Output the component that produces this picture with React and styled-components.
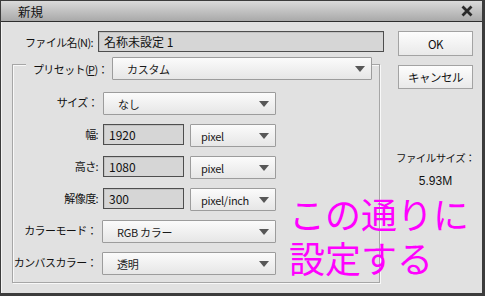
import React from 'react';
import styled, { createGlobalStyle } from 'styled-components';

const GlobalStyle = createGlobalStyle`
  body {
    margin: 0;
    background: #e1e1e1;
    font-family: "Liberation Sans", "Noto Sans CJK JP", sans-serif;
    font-size: 11px;
    color: #111;
  }
`;

const Window = styled.div`
  position: relative;
  box-sizing: border-box;
  width: 485px;
  height: 296px;
  display: flex;
  flex-direction: column;
  background: #e1e1e1;
  border: 1px solid #3c3c3c;
  border-right-width: 3px;
  border-bottom-width: 3px;
  overflow: hidden;
`;

const TitleBar = styled.div`
  height: 20px;
  flex-shrink: 0;
  display: flex;
  align-items: center;
  justify-content: space-between;
  padding: 0 9px 0 17px;
  background: linear-gradient(#dadada, #a9a9a9);
  border-bottom: 1px solid #2e2e2e;
  font-family: "Noto Sans CJK JP", sans-serif;
  font-size: 12.5px;
  color: #111;
`;

const Body = styled.div`
  flex: 1;
  display: flex;
  padding: 9px 0 0 11px;
  box-shadow: inset 1px 0 0 #f4f4f4;
`;

const Main = styled.div`
  width: 372px;
  display: flex;
  flex-direction: column;
`;

const FileRow = styled.div`
  display: flex;
  align-items: center;
  height: 21px;
`;

const Label = styled.span`
  width: ${p => p.$w || 86}px;
  flex-shrink: 0;
  padding-right: 5px;
  box-sizing: border-box;
  text-align: right;
  font-family: "Noto Sans CJK JP", sans-serif;
  font-size: 11px;
  white-space: nowrap;
  letter-spacing: -0.6px;
`;

const Field = styled.div`
  box-sizing: border-box;
  width: ${p => (p.$w ? `${p.$w}px` : 'auto')};
  flex: ${p => (p.$w ? 'none' : 1)};
  height: 21px;
  display: flex;
  align-items: center;
  padding-left: 5px;
  background: #d6d6d6;
  border: 1px solid #4e4e4e;
  box-shadow: inset 1px 1px 0 #c2c2c2;
  font-family: "Noto Sans CJK JP", sans-serif;
  font-size: 12px;
  color: #111;
`;

const Group = styled.div`
  margin-top: 12px;
  width: 368px;
  height: 219px;
  box-sizing: border-box;
  border: 1px solid #a6a6a6;
  box-shadow: inset 1px 1px 0 #f8f8f8, 1px 1px 0 #f8f8f8;
  display: flex;
  flex-direction: column;
`;

const PresetRow = styled.div`
  display: flex;
  align-items: center;
  margin: -8px 7px 12px 13px;
`;

const Legend = styled.span`
  width: 86px;
  flex-shrink: 0;
  padding-right: 4px;
  box-sizing: border-box;
  text-align: right;
  background: #e1e1e1;
  font-family: "Noto Sans CJK JP", sans-serif;
  font-size: 11px;
  letter-spacing: -0.6px;
  white-space: nowrap;
  u {
    text-underline-offset: 1px;
  }
`;

const Rows = styled.div`
  display: flex;
  flex-direction: column;
  gap: 9px;
`;

const Row = styled.div`
  display: flex;
  align-items: flex-start;
  height: 23px;
  gap: 6px;
  ${Label} {
    margin-right: -6px;
    line-height: 21px;
  }
`;

const SelectBox = styled.div`
  box-sizing: border-box;
  width: ${p => (p.$w ? `${p.$w}px` : 'auto')};
  flex: ${p => (p.$w ? 'none' : 1)};
  height: 23px;
  display: flex;
  align-items: center;
  justify-content: space-between;
  padding: 0 6px 0 ${p => p.$pad || 14}px;
  background: linear-gradient(#fbfbfb, #e6e6e6);
  border: 1px solid #9c9c9c;
  border-radius: 1px;
  font-family: "Noto Sans CJK JP", sans-serif;
  font-size: ${p => p.$fs || 11}px;
  letter-spacing: -0.3px;
  color: #1a1a1a;
  white-space: nowrap;
`;

const Side = styled.div`
  width: 75px;
  margin-left: 14px;
  display: flex;
  flex-direction: column;
  align-items: center;
`;

const Button = styled.div`
  box-sizing: border-box;
  width: 75px;
  height: ${p => p.$h || 25}px;
  margin-top: ${p => p.$mt || 0}px;
  display: flex;
  align-items: center;
  justify-content: center;
  background: linear-gradient(#fdfdfd, #e9e9e9);
  border: 1px solid #a3a3a3;
  font-family: "Noto Sans CJK JP", sans-serif;
  font-size: 11.5px;
  letter-spacing: -0.5px;
  color: #111;
`;

const SizeLabel = styled.div`
  margin-top: 62px;
  line-height: 14px;
  font-family: "Noto Sans CJK JP", sans-serif;
  font-size: 10.5px;
  letter-spacing: -0.6px;
  white-space: nowrap;
`;

const SizeValue = styled.div`
  margin-top: 9px;
  line-height: 14px;
  font-family: "Liberation Sans", sans-serif;
  font-size: 12px;
`;

const Note = styled.div`
  position: absolute;
  left: 288px;
  top: 190px;
  font-family: "Noto Sans CJK JP", sans-serif;
  font-size: 36px;
  font-weight: 400;
  color: #ff00ff;
  white-space: nowrap;
`;

const NoteLine = styled.div`
  height: 44px;
  line-height: 44px;
`;

const Arrow = () => (
  <svg width="10" height="6" viewBox="0 0 10 6">
    <path d="M0 0h10L5 6z" fill="#575757" />
  </svg>
);

const CloseIcon = () => (
  <svg width="12" height="12" viewBox="0 0 12 12">
    <path d="M1.5 1.5l9 9M10.5 1.5l-9 9" stroke="#2a2a2a" strokeWidth="2.8" />
  </svg>
);

const Select = ({ children, ...rest }) => (
  <SelectBox {...rest}>
    <span>{children}</span>
    <Arrow />
  </SelectBox>
);

export default function App() {
  return (
    <>
      <GlobalStyle />
      <Window>
        <TitleBar>
          <span>新規</span>
          <CloseIcon />
        </TitleBar>
        <Body>
          <Main>
            <FileRow>
              <Label>ファイル名(N):</Label>
              <Field>名称未設定 1</Field>
            </FileRow>
            <Group>
              <PresetRow>
                <Legend>
                  プリセット(<u>P</u>)：
                </Legend>
                <Select>カスタム</Select>
              </PresetRow>
              <Rows>
                <Row>
                  <Label $w={90}>サイズ：</Label>
                  <Select $w={173}>なし</Select>
                </Row>
                <Row>
                  <Label $w={90}>幅:</Label>
                  <Field $w={81}>1920</Field>
                  <Select $w={86} $pad={10}>pixel</Select>
                </Row>
                <Row>
                  <Label $w={90}>高さ:</Label>
                  <Field $w={81}>1080</Field>
                  <Select $w={86} $pad={10}>pixel</Select>
                </Row>
                <Row>
                  <Label $w={90}>解像度:</Label>
                  <Field $w={81}>300</Field>
                  <Select $w={86} $pad={10}>pixel/inch</Select>
                </Row>
                <Row>
                  <Label $w={89}>カラーモード：</Label>
                  <Select $w={174}>RGB カラー</Select>
                </Row>
                <Row>
                  <Label $w={89}>カンバスカラー：</Label>
                  <Select $w={174}>透明</Select>
                </Row>
              </Rows>
            </Group>
          </Main>
          <Side>
            <Button>OK</Button>
            <Button $h={24} $mt={9}>キャンセル</Button>
            <SizeLabel>ファイルサイズ：</SizeLabel>
            <SizeValue>5.93M</SizeValue>
          </Side>
        </Body>
        <Note>
          <NoteLine>この通りに</NoteLine>
          <NoteLine>設定する</NoteLine>
        </Note>
      </Window>
    </>
  );
}
